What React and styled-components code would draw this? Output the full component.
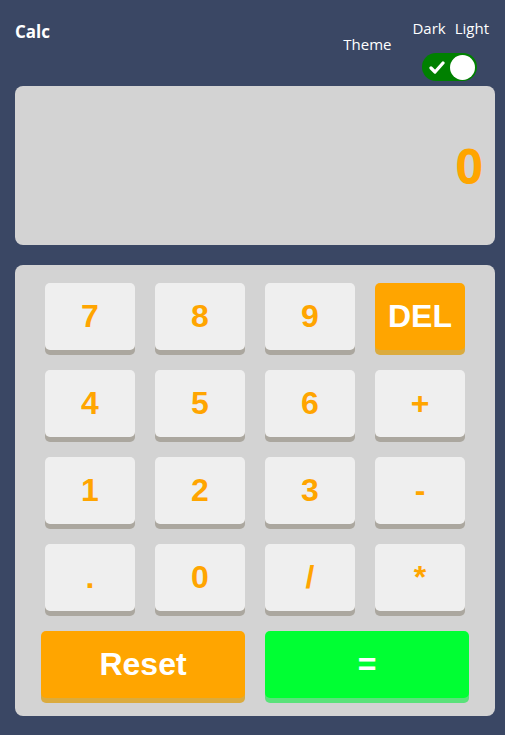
import React from "react";
import styled, { createGlobalStyle } from "styled-components";

const GlobalStyle = createGlobalStyle`
  html, body {
    margin: 0;
    padding: 0;
    background: #3a4764;
  }
  body {
    font-family: "Open Sans", "Noto Sans", sans-serif;
  }
`;

const Page = styled.div`
  width: 480px;
  padding: 0 10px 19px 15px;
`;

const Header = styled.header`
  display: flex;
  justify-content: space-between;
  align-items: flex-start;
  height: 86px;
  padding-right: 6px;
`;

const Title = styled.h1`
  margin: 0;
  padding-top: 22px;
  font-size: 17px;
  line-height: 20px;
  font-weight: 700;
  color: #ffffff;
`;

const ThemeGroup = styled.div`
  display: flex;
  align-items: flex-start;
  gap: 21px;
  color: #ffffff;
  font-size: 15px;
  line-height: 20px;
`;

const ThemeLabel = styled.span`
  margin-top: 34px;
`;

const SwitchColumn = styled.div`
  display: flex;
  flex-direction: column;
  align-items: center;
  padding-top: 18px;
`;

const Labels = styled.div`
  display: flex;
  gap: 9px;
`;

const Switch = styled.button`
  display: flex;
  align-items: center;
  justify-content: space-between;
  width: 55px;
  height: 28px;
  margin-top: 15px;
  margin-right: 2px;
  padding: 0 2px 0 7px;
  border: none;
  border-radius: 14px;
  background: #008000;
  cursor: pointer;
`;

const Knob = styled.span`
  width: 25px;
  height: 25px;
  border-radius: 50%;
  background: #ffffff;
`;

const Screen = styled.div`
  display: flex;
  align-items: center;
  justify-content: flex-end;
  height: 159px;
  padding-right: 12px;
  border-radius: 8px;
  background: #d3d3d3;
  color: #ffa500;
  font-size: 48px;
  font-weight: 700;
`;

const Keypad = styled.div`
  margin-top: 20px;
  padding: 18px 26px;
  border-radius: 8px;
  background: #d3d3d3;
`;

const KeyGrid = styled.div`
  display: grid;
  grid-template-columns: repeat(4, 90px);
  gap: 20px;
  margin: 0 4px;
`;

const BottomRow = styled.div`
  display: grid;
  grid-template-columns: 1fr 1fr;
  gap: 20px;
  margin-top: 20px;
`;

const palette = {
  plain: { bg: "#efefef", shade: "#aba79f", text: "#ffa500" },
  orange: { bg: "#ffa500", shade: "#dbab3e", text: "#ffffff" },
  green: { bg: "#00ff33", shade: "#5ae27a", text: "#ffffff" }
};

const Key = styled.button`
  display: flex;
  align-items: center;
  justify-content: center;
  height: 67px;
  padding: 0;
  border: none;
  border-radius: 5px;
  background: ${p => palette[p.$kind].bg};
  box-shadow: 0 5px 0 ${p => palette[p.$kind].shade};
  color: ${p => palette[p.$kind].text};
  font-family: "Liberation Sans", Arial, sans-serif;
  font-size: 32px;
  font-weight: 700;
  cursor: pointer;
`;

const keys = ["7", "8", "9", "DEL", "4", "5", "6", "+", "1", "2", "3", "-", ".", "0", "/", "*"];

function Check() {
  return (
    <svg width="16" height="13" viewBox="0 0 16 13">
      <polyline points="2,7 6,11 14,2" fill="none" stroke="#fff" strokeWidth="3.2" strokeLinecap="round" strokeLinejoin="round" />
    </svg>
  );
}

export default function App() {
  return (
    <Page>
      <GlobalStyle />
      <Header>
        <Title>Calc</Title>
        <ThemeGroup>
          <ThemeLabel>Theme</ThemeLabel>
          <SwitchColumn>
            <Labels>
              <span>Dark</span>
              <span>Light</span>
            </Labels>
            <Switch aria-label="Theme">
              <Check />
              <Knob />
            </Switch>
          </SwitchColumn>
        </ThemeGroup>
      </Header>
      <Screen>0</Screen>
      <Keypad>
        <KeyGrid>
          {keys.map(k => (
            <Key key={k} $kind={k === "DEL" ? "orange" : "plain"}>{k}</Key>
          ))}
        </KeyGrid>
        <BottomRow>
          <Key $kind="orange">Reset</Key>
          <Key $kind="green">=</Key>
        </BottomRow>
      </Keypad>
    </Page>
  );
}
